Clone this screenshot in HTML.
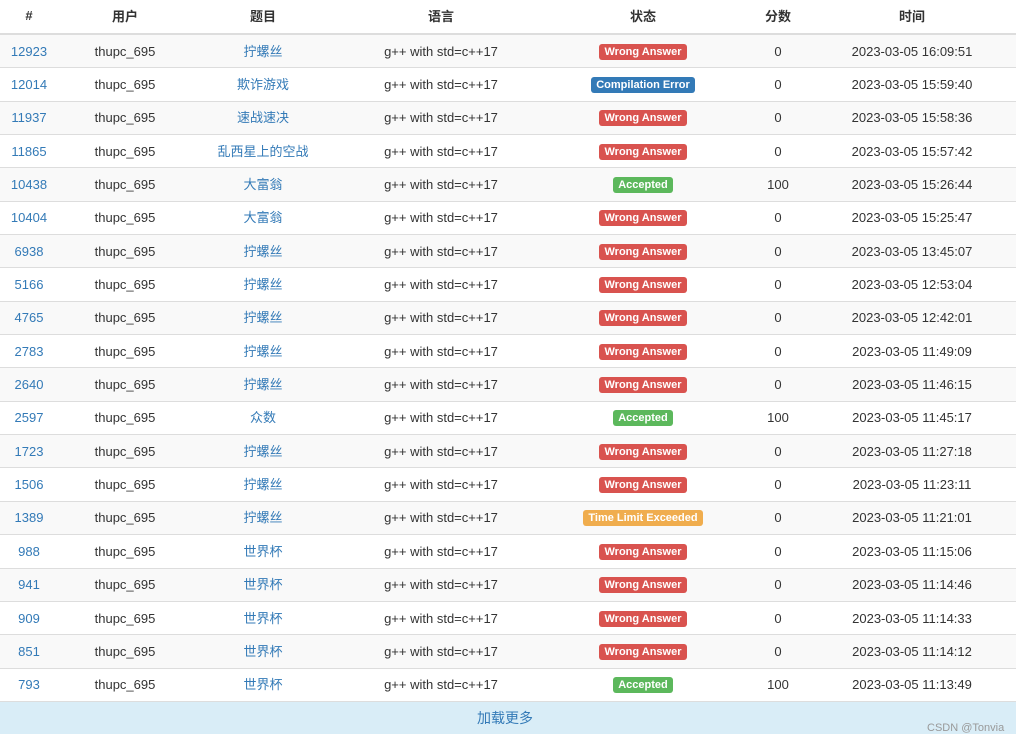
<!DOCTYPE html>
<html><head><meta charset="utf-8"><style>
body{margin:0;background:#fff;font-family:"Liberation Sans","Noto Sans CJK SC",sans-serif;font-size:13px;color:#333}
table{border-collapse:collapse;table-layout:fixed;width:1016px}
th{height:31px;font-weight:bold;text-align:center;border-bottom:2px solid #ddd;padding:0 0 2px 0;font-size:13px}
td{height:32.35px;text-align:center;border-top:1px solid #ddd;padding:0;white-space:nowrap}
tbody tr:nth-child(odd) td{background:#f9f9f9}
a{color:#337ab7;text-decoration:none}
td:nth-child(3) a{position:relative;top:-1px}
.l{display:inline-block;font-size:11px;font-weight:bold;color:#fff;padding:2px 5px 2px;border-radius:3px;line-height:12px}
.wa{background:#d9534f}.ce{background:#337ab7}.ac{background:#5cb85c}.tle{background:#f0ad4e}
.more{position:absolute;left:0;top:701px;width:1016px;height:33px;background:#d9edf7;border-top:1px solid #ddd;box-sizing:border-box}
.more span{position:absolute;left:477px;top:6px;color:#337ab7;font-size:14px}
.wm{position:absolute;left:927px;top:722px;font-size:11px;color:#999}
</style></head><body>
<table>
<colgroup><col style="width:58px"><col style="width:134px"><col style="width:142px"><col style="width:214px"><col style="width:190px"><col style="width:80px"><col style="width:188px"><col style="width:10px"></colgroup>
<thead><tr><th>#</th><th>用户</th><th>题目</th><th>语言</th><th>状态</th><th>分数</th><th>时间</th><th></th></tr></thead>
<tbody>
<tr><td><a>12923</a></td><td>thupc_695</td><td><a>拧螺丝</a></td><td>g++ with std=c++17</td><td><span class="l wa">Wrong Answer</span></td><td>0</td><td>2023-03-05 16:09:51</td><td></td></tr>
<tr><td><a>12014</a></td><td>thupc_695</td><td><a>欺诈游戏</a></td><td>g++ with std=c++17</td><td><span class="l ce">Compilation Error</span></td><td>0</td><td>2023-03-05 15:59:40</td><td></td></tr>
<tr><td><a>11937</a></td><td>thupc_695</td><td><a>速战速决</a></td><td>g++ with std=c++17</td><td><span class="l wa">Wrong Answer</span></td><td>0</td><td>2023-03-05 15:58:36</td><td></td></tr>
<tr><td><a>11865</a></td><td>thupc_695</td><td><a>乱西星上的空战</a></td><td>g++ with std=c++17</td><td><span class="l wa">Wrong Answer</span></td><td>0</td><td>2023-03-05 15:57:42</td><td></td></tr>
<tr><td><a>10438</a></td><td>thupc_695</td><td><a>大富翁</a></td><td>g++ with std=c++17</td><td><span class="l ac">Accepted</span></td><td>100</td><td>2023-03-05 15:26:44</td><td></td></tr>
<tr><td><a>10404</a></td><td>thupc_695</td><td><a>大富翁</a></td><td>g++ with std=c++17</td><td><span class="l wa">Wrong Answer</span></td><td>0</td><td>2023-03-05 15:25:47</td><td></td></tr>
<tr><td><a>6938</a></td><td>thupc_695</td><td><a>拧螺丝</a></td><td>g++ with std=c++17</td><td><span class="l wa">Wrong Answer</span></td><td>0</td><td>2023-03-05 13:45:07</td><td></td></tr>
<tr><td><a>5166</a></td><td>thupc_695</td><td><a>拧螺丝</a></td><td>g++ with std=c++17</td><td><span class="l wa">Wrong Answer</span></td><td>0</td><td>2023-03-05 12:53:04</td><td></td></tr>
<tr><td><a>4765</a></td><td>thupc_695</td><td><a>拧螺丝</a></td><td>g++ with std=c++17</td><td><span class="l wa">Wrong Answer</span></td><td>0</td><td>2023-03-05 12:42:01</td><td></td></tr>
<tr><td><a>2783</a></td><td>thupc_695</td><td><a>拧螺丝</a></td><td>g++ with std=c++17</td><td><span class="l wa">Wrong Answer</span></td><td>0</td><td>2023-03-05 11:49:09</td><td></td></tr>
<tr><td><a>2640</a></td><td>thupc_695</td><td><a>拧螺丝</a></td><td>g++ with std=c++17</td><td><span class="l wa">Wrong Answer</span></td><td>0</td><td>2023-03-05 11:46:15</td><td></td></tr>
<tr><td><a>2597</a></td><td>thupc_695</td><td><a>众数</a></td><td>g++ with std=c++17</td><td><span class="l ac">Accepted</span></td><td>100</td><td>2023-03-05 11:45:17</td><td></td></tr>
<tr><td><a>1723</a></td><td>thupc_695</td><td><a>拧螺丝</a></td><td>g++ with std=c++17</td><td><span class="l wa">Wrong Answer</span></td><td>0</td><td>2023-03-05 11:27:18</td><td></td></tr>
<tr><td><a>1506</a></td><td>thupc_695</td><td><a>拧螺丝</a></td><td>g++ with std=c++17</td><td><span class="l wa">Wrong Answer</span></td><td>0</td><td>2023-03-05 11:23:11</td><td></td></tr>
<tr><td><a>1389</a></td><td>thupc_695</td><td><a>拧螺丝</a></td><td>g++ with std=c++17</td><td><span class="l tle">Time Limit Exceeded</span></td><td>0</td><td>2023-03-05 11:21:01</td><td></td></tr>
<tr><td><a>988</a></td><td>thupc_695</td><td><a>世界杯</a></td><td>g++ with std=c++17</td><td><span class="l wa">Wrong Answer</span></td><td>0</td><td>2023-03-05 11:15:06</td><td></td></tr>
<tr><td><a>941</a></td><td>thupc_695</td><td><a>世界杯</a></td><td>g++ with std=c++17</td><td><span class="l wa">Wrong Answer</span></td><td>0</td><td>2023-03-05 11:14:46</td><td></td></tr>
<tr><td><a>909</a></td><td>thupc_695</td><td><a>世界杯</a></td><td>g++ with std=c++17</td><td><span class="l wa">Wrong Answer</span></td><td>0</td><td>2023-03-05 11:14:33</td><td></td></tr>
<tr><td><a>851</a></td><td>thupc_695</td><td><a>世界杯</a></td><td>g++ with std=c++17</td><td><span class="l wa">Wrong Answer</span></td><td>0</td><td>2023-03-05 11:14:12</td><td></td></tr>
<tr><td><a>793</a></td><td>thupc_695</td><td><a>世界杯</a></td><td>g++ with std=c++17</td><td><span class="l ac">Accepted</span></td><td>100</td><td>2023-03-05 11:13:49</td><td></td></tr>
</tbody></table>
<div class="more"><span>加载更多</span></div>
<div class="wm">CSDN @Tonvia</div>
</body></html>
